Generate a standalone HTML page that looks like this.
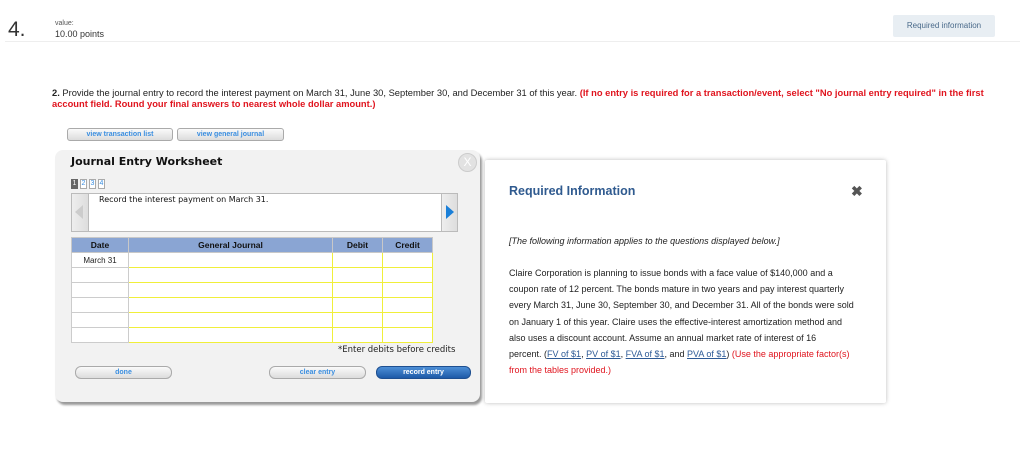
<!DOCTYPE html>
<html><head><meta charset="utf-8"><style>
*{margin:0;padding:0;box-sizing:border-box}
body{width:1024px;height:472px;background:#fff;font-family:"Liberation Sans",sans-serif;position:relative;overflow:hidden;color:#222}
.a{position:absolute}
.btn{position:absolute;height:13px;border:1px solid #aaa;border-radius:3px;background:linear-gradient(#fafafa,#dcdcdc);color:#3a8ee0;font-size:7px;font-weight:bold;text-align:center;line-height:11px}
.rb{border-radius:6px}
table{border-collapse:collapse;position:absolute;left:71px;top:237px}
td{height:15px;border:1px solid #f0ef3a;background:#fff;font-size:8px}
td.d{border:1px solid #ccc;text-align:center}
th{height:15px;background:#8aa5d3;border:1px solid #c8c8c8;font-size:8.5px;color:#111}
.p{font-size:9px;line-height:16.2px;color:#222;white-space:nowrap}
.lk{color:#2d5a96;text-decoration:underline}
.tab{position:absolute;top:179px;width:7px;height:10px;border:1px solid #aaa;color:#3a8ee0;font-size:7px;text-align:center;line-height:8px;background:#fff}
</style></head><body>
<div class="a" style="left:8px;top:18px;font-size:21px;color:#333">4.</div>
<div class="a" style="left:55px;top:20px;font-size:7px;color:#555">value:</div>
<div class="a" style="left:55px;top:29px;font-size:9px;color:#333">10.00 points</div>
<div class="a" style="left:5px;top:41px;width:1015px;height:1px;background:#eee"></div>
<div class="a" style="left:893px;top:15px;width:102px;height:22px;background:#e8eef3;border-radius:2px;font-size:8px;color:#4a6a8a;text-align:center;line-height:22px">Required information</div>
<div class="a" style="left:52px;top:88px;width:955px;font-size:9.35px;line-height:11px;color:#222"><b>2.</b> Provide the journal entry to record the interest payment on March 31, June 30, September 30, and December 31 of this year. <b style="color:#e0141e">(If no entry is required for a transaction/event, select "No journal entry required" in the first account field. Round your final answers to nearest whole dollar amount.)</b></div>
<div class="btn" style="left:67px;top:128px;width:106px">view transaction list</div>
<div class="btn" style="left:177px;top:128px;width:107px">view general journal</div>

<div class="a" style="left:55px;top:150px;width:425px;height:252px;background:#f2f2f2;border-radius:8px;box-shadow:2px 3px 2px #999"></div>
<div class="a" style="left:71px;top:155px;font-size:11px;font-weight:bold;font-family:'DejaVu Sans',sans-serif;color:#111">Journal Entry Worksheet</div>
<div class="a" style="left:458px;top:153px;width:19px;height:19px;border-radius:50%;background:#e2e2e2;border:1px solid #ccc;color:#fff;font-size:12px;text-align:center;line-height:17px">X</div>
<div class="tab" style="left:71px;background:#666;color:#fff;border-color:#666">1</div>
<div class="tab" style="left:80px">2</div>
<div class="tab" style="left:89px">3</div>
<div class="tab" style="left:98px">4</div>
<div class="a" style="left:71px;top:193px;width:387px;height:39px;background:#fff;border:1px solid #bbb"></div>
<div class="a" style="left:71px;top:193px;width:18px;height:39px;background:linear-gradient(90deg,#eee,#ddd);border:1px solid #bbb"></div>
<div class="a" style="left:75px;top:205px;width:0;height:0;border-top:7px solid transparent;border-bottom:7px solid transparent;border-right:8px solid #ccc"></div>
<div class="a" style="left:441px;top:193px;width:17px;height:39px;background:linear-gradient(90deg,#eee,#ddd);border:1px solid #bbb"></div>
<div class="a" style="left:446px;top:205px;width:0;height:0;border-top:7px solid transparent;border-bottom:7px solid transparent;border-left:8px solid #1a7fd8"></div>
<div class="a" style="left:99px;top:195px;font-size:8px;font-family:'DejaVu Sans',sans-serif;color:#111">Record the interest payment on March 31.</div>
<table>
<tr><th style="width:57px">Date</th><th style="width:204px">General Journal</th><th style="width:50px">Debit</th><th style="width:50px">Credit</th></tr>
<tr><td class="d">March 31</td><td></td><td></td><td></td></tr>
<tr><td class="d"></td><td></td><td></td><td></td></tr>
<tr><td class="d"></td><td></td><td></td><td></td></tr>
<tr><td class="d"></td><td></td><td></td><td></td></tr>
<tr><td class="d"></td><td></td><td></td><td></td></tr>
<tr><td class="d"></td><td></td><td></td><td></td></tr>
</table>
<div class="a" style="left:338px;top:345px;font-size:8.5px;font-family:'DejaVu Sans',sans-serif;color:#222">*Enter debits before credits</div>
<div class="btn rb" style="left:75px;top:366px;width:97px">done</div>
<div class="btn rb" style="left:269px;top:366px;width:97px">clear entry</div>
<div class="btn rb" style="left:376px;top:366px;width:95px;background:linear-gradient(#4d8fd6,#1e5aa8);color:#fff;border-color:#1e4f90">record entry</div>

<div class="a" style="left:485px;top:160px;width:401px;height:243px;background:#fff;box-shadow:0 0 4px #bbb;border-radius:2px"></div>
<div class="a" style="left:509px;top:184px;font-size:12.5px;font-weight:bold;color:#2f5a8f">Required Information</div>
<div class="a" style="left:851px;top:183px;font-size:14px;font-weight:bold;color:#555">✖</div>
<div class="a p" style="left:509px;top:233px;font-style:italic">[The following information applies to the questions displayed below.]</div>
<div class="a p" style="left:509px;top:265px">Claire Corporation is planning to issue bonds with a face value of $140,000 and a<br>coupon rate of 12 percent. The bonds mature in two years and pay interest quarterly<br>every March 31, June 30, September 30, and December 31. All of the bonds were sold<br>on January 1 of this year. Claire uses the effective-interest amortization method and<br>also uses a discount account. Assume an annual market rate of interest of 16<br>percent. (<span class="lk">FV of $1</span>, <span class="lk">PV of $1</span>, <span class="lk">FVA of $1</span>, and <span class="lk">PVA of $1</span>) <span style="color:#e0141e">(Use the appropriate factor(s)<br>from the tables provided.)</span></div>
</body></html>
